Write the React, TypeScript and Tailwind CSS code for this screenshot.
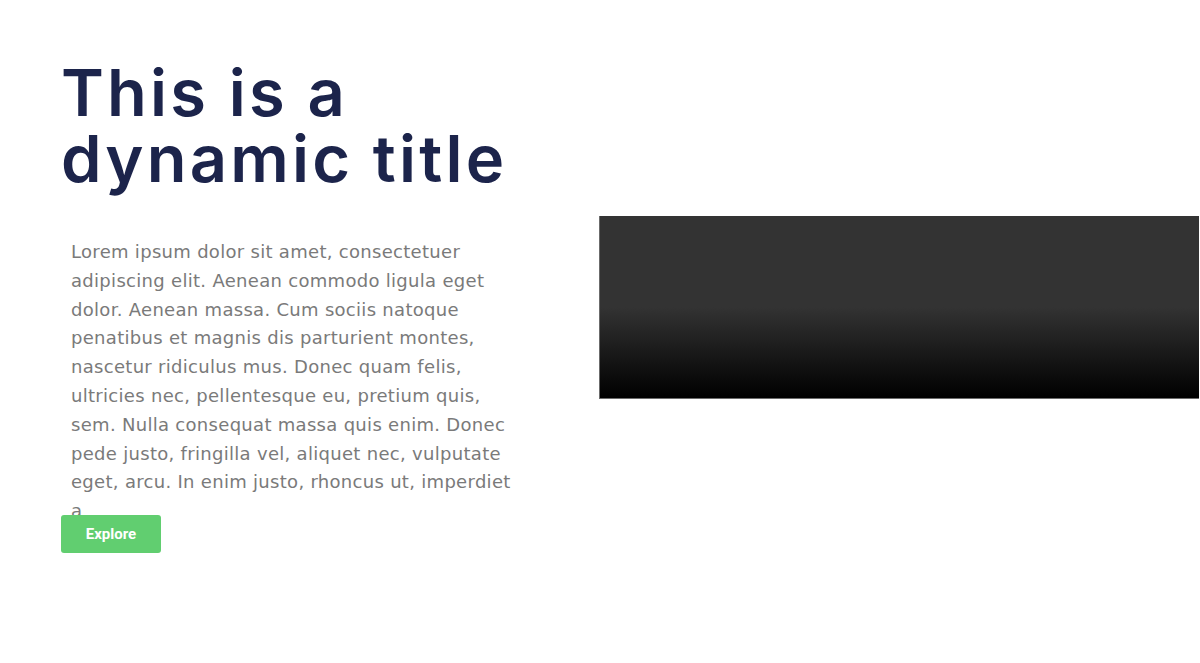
import React from 'react';

const bodyLines = [
    'Lorem ipsum dolor sit amet, consectetuer',
    'adipiscing elit. Aenean commodo ligula eget',
    'dolor. Aenean massa. Cum sociis natoque',
    'penatibus et magnis dis parturient montes,',
    'nascetur ridiculus mus. Donec quam felis,',
    'ultricies nec, pellentesque eu, pretium quis,',
    'sem. Nulla consequat massa quis enim. Donec',
    'pede justo, fringilla vel, aliquet nec, vulputate',
    'eget, arcu. In enim justo, rhoncus ut, imperdiet',
    'a',
];

const App: React.FC = () => {
    return (
        <div className="min-h-[663px] w-[1200px] bg-white font-['Inter',sans-serif]">
            <section className="flex items-center pt-[60px] pl-[61px]">
                {/* Left column: title, copy, call to action */}
                <div className="w-[480px] shrink-0 flex flex-col items-start">
                    <h1 className="text-[65px] leading-[66px] font-semibold text-[#1c244b] tracking-[3.2px]">
                        This is a<br />dynamic title
                    </h1>
                    <p className="mt-[46px] pl-[10px] w-[470px] h-[277px] whitespace-nowrap font-['DejaVu_Sans',sans-serif] text-[18px] tracking-[0.3px] leading-[28.8px] text-[#7a7a7a]">
                        {bodyLines.map((line, i) => (
                            <React.Fragment key={i}>
                                {line}
                                {i < bodyLines.length - 1 && <br />}
                            </React.Fragment>
                        ))}
                    </p>
                    <button className="relative w-[100px] h-[38px] rounded-[3px] bg-[#61ce70] text-white text-[15px] font-bold font-['Roboto',sans-serif]">
                        Explore
                    </button>
                </div>

                {/* Right column: media placeholder */}
                <div className="flex-1 pl-[58px]">
                    <div className="mt-[2px] h-[183px] w-[600px] border-l border-b border-[#6b6b6b] bg-[linear-gradient(180deg,#333333_50%,#000000_100%)]" />
                </div>
            </section>
        </div>
    );
};

export default App;
